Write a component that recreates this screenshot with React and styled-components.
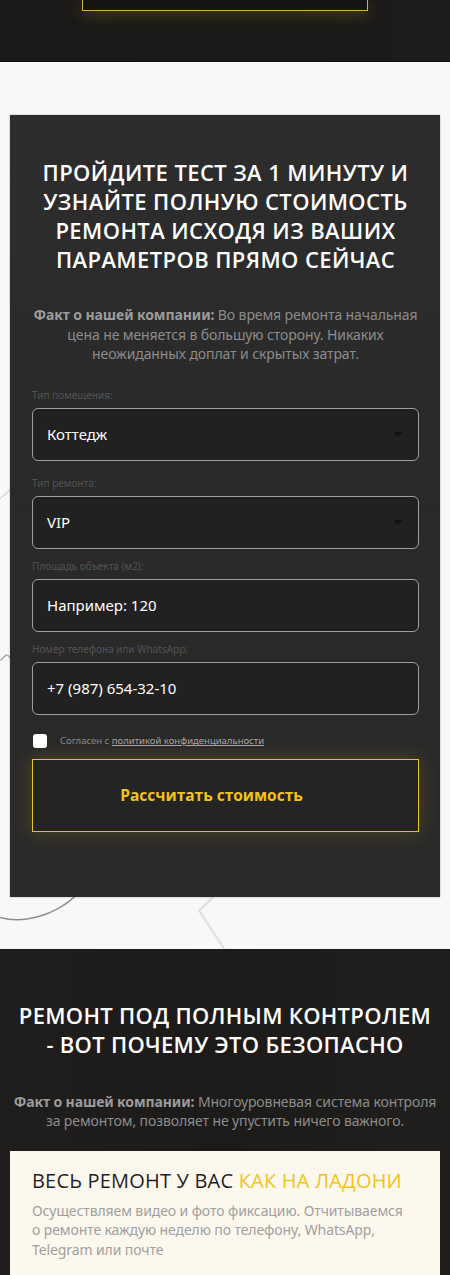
import React from 'react';
import styled, { createGlobalStyle } from 'styled-components';

const GlobalStyle = createGlobalStyle`
  body {
    margin: 0;
    background: #f8f8f8;
    font-family: "Noto Sans", "Open Sans", sans-serif;
  }
  * { box-sizing: border-box; }
`;

const fields = [
  { label: 'Тип помещения:', value: 'Коттедж', select: true, extra: true },
  { label: 'Тип ремонта:', value: 'VIP', select: true },
  { label: 'Площадь объекта (м2):', value: 'Например: 120' },
  { label: 'Номер телефона или WhatsApp:', value: '+7 (987) 654-32-10' },
];

const App = () => {
  return (
    <Page>
      <GlobalStyle />
      <TopStrip>
        <TopButtonEdge />
      </TopStrip>

      <QuizSection>
        <Decor viewBox="0 0 450 886" preserveAspectRatio="none">
          <path d="M0 436 C6 432 10 428 12 424" stroke="#cfcfcf" strokeWidth="1.2" fill="none" />
          <path d="M0 598 C4 596 6 590 9 594 C11 598 12 592 14 588" stroke="#9a9a9a" strokeWidth="1.2" fill="none" />
          <path d="M0 855 C25 862 55 852 75 834" stroke="#8d8d8d" strokeWidth="1.6" fill="none" />
          <path d="M214 834 L199 848 L224 886" stroke="#dedede" strokeWidth="2" fill="none" />
        </Decor>
        <QuizCard>
          <Title>
            Пройдите тест за 1 минуту и узнайте полную стоимость ремонта исходя из ваших
            параметров прямо сейчас
          </Title>
          <Fact>
            <b>Факт о нашей компании:</b> Во время ремонта начальная цена не меняется в
            большую сторону. Никаких неожиданных доплат и скрытых затрат.
          </Fact>
          <Form>
            {fields.map((f) => (
              <Field key={f.label} $extra={f.extra}>
                <Label>{f.label}</Label>
                <InputBox>
                  <span>{f.value}</span>
                  {f.select && <Caret />}
                </InputBox>
              </Field>
            ))}
            <Agree>
              <CheckBox />
              <span>
                Согласен с <a>политикой конфиденциальности</a>
              </span>
            </Agree>
            <SubmitButton>Рассчитать стоимость</SubmitButton>
          </Form>
        </QuizCard>
      </QuizSection>

      <ControlSection>
        <Title $tight>
          Ремонт под полным контролем
          <br />- вот почему это безопасно
        </Title>
        <Fact $wide>
          <b>Факт о нашей компании:</b> Многоуровневая система контроля
          <br />
          за ремонтом, позволяет не упустить ничего важного.
        </Fact>
        <InfoCard>
          <InfoTitle>
            Весь ремонт у вас <Accent>как на ладони</Accent>
          </InfoTitle>
          <InfoText>
            Осуществляем видео и фото фиксацию. Отчитываемся о ремонте каждую неделю по
            телефону, WhatsApp, Telegram или почте
          </InfoText>
        </InfoCard>
      </ControlSection>
    </Page>
  );
};

const Page = styled.div`
  width: 450px;
  height: 1275px;
  overflow: hidden;
`;

const TopStrip = styled.div`
  height: 62px;
  background: linear-gradient(90deg, #1c1b19, #1a1917 60%, #1d1c1a);
  display: flex;
  justify-content: center;
  border-bottom: 1px solid #111;
`;

const TopButtonEdge = styled.div`
  width: 286px;
  height: 11px;
  margin-left: -1px;
  background: #161513;
  border: 1px solid #cdb44a;
  border-top: none;
  box-shadow: 0 4px 14px rgba(160, 120, 20, 0.35);
`;

const QuizSection = styled.section`
  position: relative;
  padding: 53px 10px 52px 10px;
  background: #f8f8f8;
`;

const Decor = styled.svg`
  position: absolute;
  left: 0;
  top: 0;
  width: 100%;
  height: 100%;
`;

const QuizCard = styled.div`
  position: relative;
  background: linear-gradient(180deg, #2d2d2d 0%, #292929 50%, #2a2a29 100%);
  padding: 43px 21px 65px 22px;
  box-shadow: 0 0 2px rgba(0, 0, 0, 0.3);
`;

const Title = styled.h2`
  margin: 0;
  color: #fff;
  text-align: center;
  text-transform: uppercase;
  font-family: "Open Sans", "Noto Sans", sans-serif;
  font-weight: 600;
  font-size: 22px;
  line-height: 29px;
  letter-spacing: ${(p) => (p.$tight ? '0.3px' : '0.4px')};
  padding: 0 ${(p) => (p.$tight ? '0' : '8px')};
`;

const Fact = styled.p`
  margin: ${(p) => (p.$wide ? '33px 0 0' : '31px 0 0')};
  color: #8c8c8c;
  text-align: center;
  font-size: 14px;
  line-height: 19.5px;
  letter-spacing: -0.1px;
  b {
    color: #9c9c9c;
    font-weight: 700;
  }
`;

const Form = styled.div`
  margin-top: 24px;
  display: flex;
  flex-direction: column;
  gap: 10px;
`;

const Field = styled.div`
  display: flex;
  flex-direction: column;
  gap: 6px;
  margin-bottom: ${(p) => (p.$extra ? '5px' : '0')};
`;

const Label = styled.div`
  color: #535353;
  font-size: 10px;
  line-height: 14px;
`;

const InputBox = styled.div`
  height: 53px;
  border: 1.5px solid #9e9e9e;
  border-radius: 6px;
  background: #212121;
  display: flex;
  align-items: center;
  justify-content: space-between;
  padding: 0 16px 0 14px;
  color: #fff;
  font-size: 15px;
`;

const Caret = styled.div`
  width: 0;
  height: 0;
  border-left: 4px solid transparent;
  border-right: 4px solid transparent;
  border-top: 5px solid #111;
`;

const Agree = styled.label`
  display: flex;
  align-items: center;
  gap: 13px;
  margin-top: 9px;
  color: #8a8a8a;
  font-size: 9.5px;
  padding-left: 1px;
  a {
    color: #a6a6a6;
    text-decoration: underline;
  }
`;

const CheckBox = styled.span`
  width: 14px;
  height: 14px;
  border-radius: 3px;
  background: #fff;
`;

const SubmitButton = styled.button`
  margin-top: 1px;
  height: 73px;
  background: #242424;
  border: 1.5px solid #e3c329;
  box-shadow: 0 0 18px rgba(200, 160, 20, 0.25);
  color: #f2c41a;
  font-family: "Open Sans", "Noto Sans", sans-serif;
  font-weight: 700;
  font-size: 15.5px;
  padding: 0 28px 0 0;
  cursor: pointer;
`;

const ControlSection = styled.section`
  height: 327px;
  background: linear-gradient(90deg, #1f1e1c, #1c1b19 50%, #201f1d);
  padding: 52px 10px 0;
`;

const InfoCard = styled.div`
  margin-top: 20px;
  background: #fdf8ee;
  padding: 17px 30px 40px 22px;
`;

const InfoTitle = styled.h3`
  margin: 0;
  color: #1f1f1f;
  text-transform: uppercase;
  font-family: "Open Sans", "Noto Sans", sans-serif;
  font-weight: 500;
  font-size: 20px;
  line-height: 26px;
  letter-spacing: 0.2px;
  white-space: nowrap;
`;

const Accent = styled.span`
  color: #f2c318;
`;

const InfoText = styled.p`
  margin: 7px 0 0;
  color: #a0a0a0;
  font-size: 14px;
  line-height: 19.5px;
  letter-spacing: -0.1px;
`;

export default App;
